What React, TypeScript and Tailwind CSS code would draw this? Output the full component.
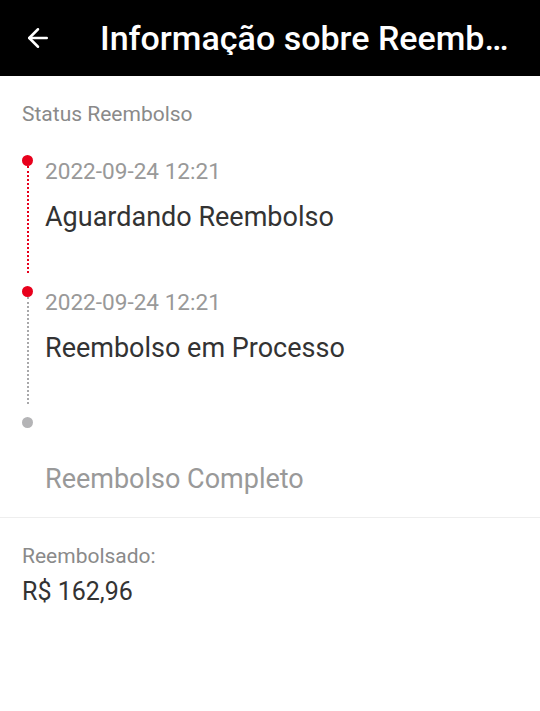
import { ArrowLeft } from 'lucide-react';

type Step = { date?: string; title: string; done: boolean; line?: 'red' | 'gray' };

const steps: Step[] = [
  { date: '2022-09-24 12:21', title: 'Aguardando Reembolso', done: true, line: 'red' },
  { date: '2022-09-24 12:21', title: 'Reembolso em Processo', done: true, line: 'gray' },
  { title: 'Reembolso Completo', done: false },
];

export default function App() {
  return (
    <div className="min-h-screen bg-white font-['Roboto',sans-serif]">
      {/* Header */}
      <header className="flex h-[76px] items-center bg-black pr-[28px] text-white">
        <div className="flex w-[100px] shrink-0 items-center pl-[23px]">
          <ArrowLeft size={30} strokeWidth={2} />
        </div>
        <h1 className="truncate text-[34px] font-medium leading-none">Informação sobre Reembolso</h1>
      </header>

      <main>
        <p className="px-[22px] pt-[25px] text-[21px] leading-[26px] text-[#8a8a8a]">Status Reembolso</p>

        {/* Timeline */}
        <div className="mt-[28px] pl-[22px]">
          {steps.map((s, i) => (
            <div key={i} className={`flex ${s.line ? 'h-[131px]' : 'h-[100px]'}`}>
              <div className="flex w-[11px] shrink-0 flex-col items-center">
                <div className={`h-[11px] w-[11px] rounded-full ${s.done ? 'bg-[#e8001c]' : 'bg-[#b4b4b6]'}`} />
                {s.line === 'red' && <div className="mb-[13px] w-0 flex-1 border-l-2 border-dotted border-[#e8001c]" />}
                {s.line === 'gray' && <div className="mb-[13px] w-0 flex-1 border-l-2 border-dotted border-[#a8a8aa]" />}
              </div>
              <div className="pl-[12px]">
                <p className="mt-[3px] h-[28px] text-[22.6px] leading-[28px] text-[#999999]">{s.date}</p>
                <p className={`mt-[14px] text-[27px] leading-[34px] ${s.done ? 'text-[#333333]' : 'text-[#999999]'}`}>
                  {s.title}
                </p>
              </div>
            </div>
          ))}
        </div>

        <div className="h-px bg-[#eeeeee]" />

        <div className="px-[22px] pt-[25px]">
          <p className="text-[21px] leading-[26px] text-[#8a8a8a]">Reembolsado:</p>
          <p className="mt-[8px] text-[25px] leading-[30px] text-[#333333]">R$ 162,96</p>
        </div>
      </main>
    </div>
  );
}
